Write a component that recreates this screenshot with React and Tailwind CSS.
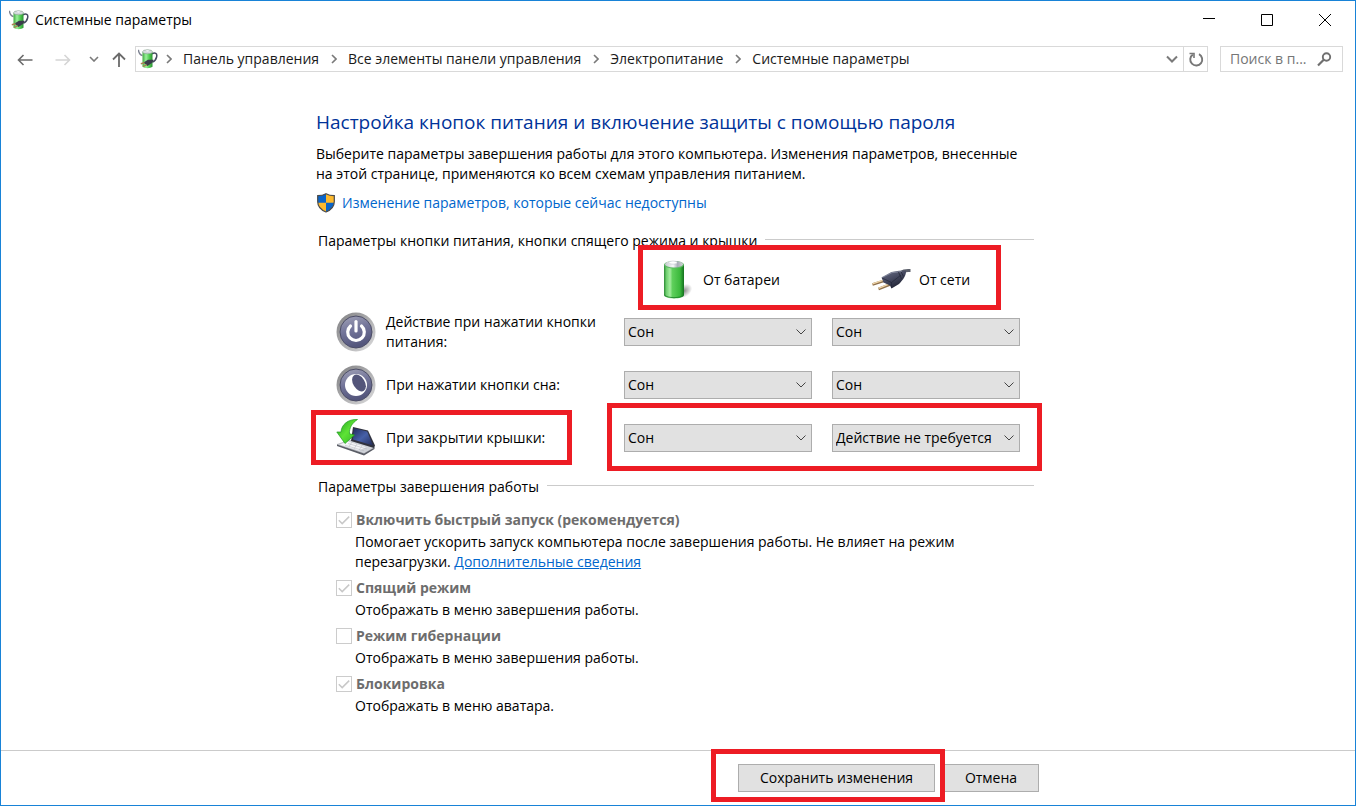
import React from 'react';

const crumbs = ['Панель управления', 'Все элементы панели управления', 'Электропитание', 'Системные параметры'];

const BatteryPlugIcon = () => (
    <svg className="w-5 h-5 shrink-0" viewBox="0 0 20 20" aria-hidden="true">
        <defs>
            <linearGradient id="miniBattery">
                <stop offset="0" stopColor="#3fa83f" />
                <stop offset="0.35" stopColor="#9af09a" />
                <stop offset="0.7" stopColor="#4cc94c" />
                <stop offset="1" stopColor="#2c8f36" />
            </linearGradient>
        </defs>
        <path d="M0.4 0.800C0.800 4 1.800 6 4.500 6.500" fill="none" stroke="#7b8090" strokeWidth="1.400" />
        <path d="M14 5C17 3 19.500 4.500 18.600 8C18 10.500 17 12 14.500 13" fill="none" stroke="#454a60" strokeWidth="1.500" />
        <path d="M4.500 3V17.800C6.500 19.600 12.500 19.600 14.500 17.800V3Z" fill="url(#miniBattery)" />
        <ellipse cx="9.500" cy="2.800" rx="5" ry="2" fill="#d5dade" stroke="#7fa387" strokeWidth="0.600" />
        <ellipse cx="9.500" cy="1.900" rx="2.200" ry="1" fill="#f6f6f8" stroke="#a4a8b0" strokeWidth="0.300" />
        <path d="M5.500 13.500L10 10.800L15.500 10.800L14.500 13.500L9.500 17Z" fill="#3a3c4a" />
        <path d="M2.800 14.800L6.500 13.800M5 17.300L8.800 15.800" stroke="#a98450" strokeWidth="1.400" />
    </svg>
);

const BatteryIcon = () => (
    <svg className="w-10 h-10 shrink-0" viewBox="0 0 40 40" aria-hidden="true">
        <defs>
            <linearGradient id="batteryBody">
                <stop offset="0" stopColor="#2c8a35" />
                <stop offset="0.12" stopColor="#6fcf6f" />
                <stop offset="0.3" stopColor="#a5eda0" />
                <stop offset="0.42" stopColor="#5fd05c" />
                <stop offset="0.8" stopColor="#3bb93c" />
                <stop offset="1" stopColor="#14701f" />
            </linearGradient>
            <linearGradient id="batteryTop">
                <stop offset="0" stopColor="#c4c9cc" />
                <stop offset="0.45" stopColor="#f7f8fa" />
                <stop offset="0.7" stopColor="#a9adb8" />
                <stop offset="1" stopColor="#d0d4d6" />
            </linearGradient>
            <radialGradient id="batteryShadow">
                <stop offset="0" stopColor="#000" stopOpacity="0.450" />
                <stop offset="1" stopColor="#000" stopOpacity="0" />
            </radialGradient>
        </defs>
        <ellipse cx="29" cy="31" rx="9" ry="6" fill="url(#batteryShadow)" transform="rotate(-35 29 31)" />
        <path d="M9 4.500V35C9 39.500 29 39.500 29 35V4.500Z" fill="url(#batteryBody)" />
        <ellipse cx="19" cy="4.800" rx="10" ry="3.800" fill="#5fb866" />
        <ellipse cx="19" cy="4.200" rx="9" ry="3.300" fill="url(#batteryTop)" />
        <ellipse cx="18" cy="2.600" rx="4" ry="1.600" fill="#fff" stroke="#b8bdc8" strokeWidth="0.500" />
        <path d="M9.500 35C12 38.500 26 38.500 28.500 35" fill="none" stroke="#1a7d27" strokeWidth="0.800" />
    </svg>
);

const PlugIcon = () => (
    <svg className="w-10 h-10 shrink-0" viewBox="0 0 40 40" aria-hidden="true">
        <defs>
            <linearGradient id="plugBody" x1="0" y1="0" x2="0.600" y2="1">
                <stop offset="0" stopColor="#6d7188" />
                <stop offset="0.5" stopColor="#464a61" />
                <stop offset="1" stopColor="#1d2030" />
            </linearGradient>
        </defs>
        <path d="M1.500 24.500L14 20.500" stroke="#8f704a" strokeWidth="2.600" />
        <path d="M1.500 23.800L14 19.600" stroke="#f0d6aa" strokeWidth="1.300" />
        <path d="M7.500 29L19 24.500" stroke="#8f704a" strokeWidth="2.600" />
        <path d="M7.500 28.300L19 23.600" stroke="#f0d6aa" strokeWidth="1.300" />
        <path d="M30 12.500C33 10 35 10.500 39.500 10.500" fill="none" stroke="#5c606b" strokeWidth="3" />
        <path d="M10.500 17.500L20.500 12L28 10.800L35 10.500C35.500 15 32 20 28 24L20.500 28.500L19 25.500L12.500 22.500Z" fill="url(#plugBody)" />
        <path d="M11 17.500L21 12.600L31 11.500" fill="none" stroke="#9a9fb2" strokeWidth="0.700" />
        <path d="M11 18L20.500 22.500L20.500 28M20.500 22.500L30 15" fill="none" stroke="#23263a" strokeWidth="0.700" />
        <path d="M27.500 12L30.500 19M30 11.500L32.500 16.500" stroke="#262938" strokeWidth="0.800" />
    </svg>
);

const RoundButtonFace = ({ id, children }) => (
    <svg className="w-10 h-10 shrink-0" viewBox="0 0 40 40" aria-hidden="true">
        <defs>
            <linearGradient id={`${id}Rim`} x1="0" y1="0" x2="1" y2="1">
                <stop offset="0" stopColor="#7e7e80" />
                <stop offset="0.55" stopColor="#b2b2b4" />
                <stop offset="1" stopColor="#dededf" />
            </linearGradient>
            <linearGradient id={`${id}Face`} x1="0" y1="0" x2="0.300" y2="1">
                <stop offset="0" stopColor="#a3a4b8" />
                <stop offset="0.5" stopColor="#73759a" />
                <stop offset="1" stopColor="#54567c" />
            </linearGradient>
        </defs>
        <circle cx="20" cy="20" r="19.500" fill={`url(#${id}Rim)`} />
        <circle cx="20" cy="20" r="16" fill={`url(#${id}Face)`} stroke="#4c4d66" strokeWidth="1" />
        {children}
    </svg>
);

const PowerIcon = () => (
    <RoundButtonFace id="power">
        <path d="M14.500 14A8.300 8.300 0 1 0 25.500 14" fill="none" stroke="#fff" strokeWidth="3.200" strokeLinecap="round" />
        <path d="M20 9.500V19" stroke="#fff" strokeWidth="3.200" strokeLinecap="round" />
    </RoundButtonFace>
);

const SleepIcon = () => (
    <RoundButtonFace id="sleep">
        <circle cx="20" cy="20" r="11" fill="#fff" />
        <ellipse cx="23" cy="18" rx="5.800" ry="9.200" fill="#53557a" transform="rotate(-32 23 18)" />
    </RoundButtonFace>
);

const LidIcon = () => (
    <svg className="w-10 h-10 shrink-0" viewBox="0 0 40 40" aria-hidden="true">
        <defs>
            <linearGradient id="lidScreen" x1="0" y1="0" x2="1" y2="1">
                <stop offset="0" stopColor="#222b5c" />
                <stop offset="0.5" stopColor="#4660a8" />
                <stop offset="1" stopColor="#252c58" />
            </linearGradient>
            <linearGradient id="lidArrow" x1="0" y1="0" x2="1" y2="1">
                <stop offset="0" stopColor="#1d9a1e" />
                <stop offset="0.5" stopColor="#5ee336" />
                <stop offset="1" stopColor="#2bb422" />
            </linearGradient>
        </defs>
        <path d="M1 26.500L14 22L38.500 29.500L28 35.500Z" fill="#cfd2d8" stroke="#9a9da4" strokeWidth="0.500" />
        <path d="M1 26.500L28 35.500L38.500 29.500V31L28 37.500L1 28Z" fill="#5a5d66" />
        <path d="M3.500 26.500L12 23.500L30 29.300L23 32.500Z" fill="#f3f4f6" />
        <path d="M9 27.300L28 32.800M12 25.500L31 31M16 24L13 28.500M21 26L18 31M26 28L23 32" stroke="#b2b5bc" strokeWidth="0.500" />
        <path d="M17 9L32 12.500L39 27.500L38 30L15 23Z" fill="#30323e" />
        <path d="M18 10.300L31.200 13.500L37 27.500L17 21.500Z" fill="url(#lidScreen)" />
        <path d="M21.500 1.500C12 1 5.500 6.500 5 14L0.800 14L9 25.500L18.500 17L13.500 15.800C13 10 16 5 21.500 1.500Z" fill="url(#lidArrow)" stroke="#1d9a1e" strokeWidth="0.700" />
    </svg>
);

const ShieldIcon = () => (
    <svg className="w-5 h-5 shrink-0" viewBox="0 0 20 20" aria-hidden="true">
        <path d="M10 0.700C12.500 2.200 15.500 2.700 18.300 2.700V8.500C18.300 13.500 15 17 10 19C5 17 1.700 13.500 1.700 8.500V2.700C4.500 2.700 7.500 2.200 10 0.700Z" fill="#fdb92c" />
        <path d="M10 0.700V9.800H1.700V2.700C4.500 2.700 7.500 2.200 10 0.700Z" fill="#0a64c8" />
        <path d="M10 9.800H18.200C17.500 14 15 17 10 19Z" fill="#0a64c8" />
        <path d="M10 0.700C12.500 2.200 15.500 2.700 18.300 2.700V8.500C18.300 13.500 15 17 10 19C5 17 1.700 13.500 1.700 8.500V2.700C4.500 2.700 7.500 2.200 10 0.700Z" fill="none" stroke="#4b4b4b" strokeWidth="1.200" />
    </svg>
);

const Chevron = ({ className, d = 'M0.500 0.500L5 5L9.500 0.500', box = '0 0 10 6', width = 1 }) => (
    <svg className={className} viewBox={box} fill="none" stroke="currentColor" strokeWidth={width} aria-hidden="true">
        <path d={d} />
    </svg>
);

// Red frame drawn over the highlighted area
const Highlight = ({ className }) => (
    <div className={`absolute pointer-events-none border-5 border-[#ed1c24] ${className}`} />
);

const SectionTitle = ({ children }) => (
    <div className="flex gap-2 pl-0.5 pr-1.5">
        <h2>{children}</h2>
        <div className="flex-1 mt-2 border-t border-[#cbcbcb]" />
    </div>
);

const ActionSelect = ({ label, value }) => (
    <div className="relative">
        <select
            aria-label={label}
            defaultValue={value}
            className="w-full h-7 pl-[3px] pr-5 appearance-none bg-[#e1e1e1] border border-[#adadad] text-black"
        >
            <option>Сон</option>
            <option>Действие не требуется</option>
        </select>
        <Chevron className="absolute right-1.5 top-[11px] w-2.5 h-1.5 pointer-events-none text-[#444444]" />
    </div>
);

const ActionRow = ({ icon, label, battery, mains, children }) => (
    <div className="relative grid grid-cols-[288px_188px_188px] gap-x-5 items-center min-h-10">
        <div className="flex items-center gap-2.5 pl-5">
            {icon}
            <span>{label}</span>
        </div>
        <ActionSelect label={`${label} От батареи`} value={battery} />
        <ActionSelect label={`${label} От сети`} value={mains} />
        {children}
    </div>
);

const ShutdownOption = ({ id, label, checked, children }) => (
    <div className="pl-5">
        <div className="flex items-center gap-1">
            <span className="relative w-4 h-4">
                <input
                    id={id}
                    type="checkbox"
                    defaultChecked={checked}
                    disabled
                    className="block w-4 h-4 appearance-none bg-white border border-[#cccccc]"
                />
                {checked && (
                    <svg className="absolute inset-0 w-4 h-4 pointer-events-none" viewBox="0 0 16 16" fill="none" stroke="#c8c8c8" strokeWidth="1.500" aria-hidden="true">
                        <path d="M2.800 8.200L6.200 11.600L13.200 4.600" />
                    </svg>
                )}
            </span>
            <label htmlFor={id} className="font-bold text-[#6d6d6d]">{label}</label>
        </div>
        <p className="mt-0.5 pl-[19px]">{children}</p>
    </div>
);

const App = () => (
    <div className="min-h-screen flex flex-col bg-white border border-[#1883d7] font-['Open_Sans','Noto_Sans',sans-serif] text-[14px] leading-5 text-black">
        {/* Title bar */}
        <header className="flex items-center h-[38px] pl-2 pr-6">
            <BatteryPlugIcon />
            <h1 className="flex-1 ml-1.5">Системные параметры</h1>
            <div className="flex items-center gap-[46px]">
                <button type="button" aria-label="Свернуть">
                    <svg className="w-3 h-3" viewBox="0 0 12 12" stroke="#000"><path d="M0 4.500H12" /></svg>
                </button>
                <button type="button" aria-label="Развернуть">
                    <svg className="w-3 h-3" viewBox="0 0 12 12" fill="none" stroke="#000"><path d="M0.500 0.500H11.500V11.500H0.500Z" /></svg>
                </button>
                <button type="button" aria-label="Закрыть">
                    <svg className="w-3 h-3" viewBox="0 0 12 12" stroke="#000"><path d="M0 0L12 12M12 0L0 12" /></svg>
                </button>
            </div>
        </header>

        {/* Navigation */}
        <nav className="flex items-center mt-[7px] pl-4 pr-3">
            <button type="button" aria-label="Назад" className="text-[#6b6b6b]">
                <Chevron className="w-4 h-4" box="0 0 16 16" d="M15.500 9H1.500M6.500 4L1.500 9L6.500 14" width={1.6} />
            </button>
            <button type="button" aria-label="Вперёд" className="ml-[22px] text-[#d5d5d5]">
                <Chevron className="w-4 h-4" box="0 0 16 16" d="M0.500 9H14.500M9.500 4L14.500 9L9.500 14" width={1.6} />
            </button>
            <button type="button" aria-label="Последние расположения" className="ml-[18px] text-[#7a7a7a]">
                <Chevron className="w-2.5 h-1.5" d="M1 1L5 5L9 1" width={1.6} />
            </button>
            <button type="button" aria-label="Вверх" className="ml-3 text-[#6b6b6b]">
                <Chevron className="w-4 h-4" box="0 0 16 16" d="M8 16V2.500M2 8.500L8 2.500L14 8.500" width={1.8} />
            </button>
            <div className="flex flex-1 items-center h-[26px] ml-2 border border-[#d9d9d9]">
                <div className="ml-0.5"><BatteryPlugIcon /></div>
                <ol className="flex flex-1 items-center">
                    {crumbs.map((crumb) => (
                        <li key={crumb} className="flex items-center ml-3 first:ml-2">
                            <Chevron className="w-1.5 h-2.5 mr-[11px] text-[#7a7a7a]" box="0 0 6 10" d="M1 1L5 5L1 9" width={1.6} />
                            <a href="#" className="text-[#1a1a1a]">{crumb}</a>
                        </li>
                    ))}
                </ol>
                <button type="button" aria-label="Предыдущие расположения" className="mr-[5px] text-[#7a7a7a]">
                    <Chevron className="w-3 h-2" box="0 0 12 8" d="M1 1.500L6 6.500L11 1.500" width={2} />
                </button>
                <button type="button" aria-label="Обновить" className="flex items-center justify-center w-6 h-6 border-l border-[#d9d9d9]">
                    <svg className="w-4 h-4" viewBox="0 0 16 16" fill="none" stroke="#777" strokeWidth="1.900">
                        <path d="M11 3.200A6 6 0 1 1 4.800 3.600" />
                        <path d="M1.500 2.500H6V7" strokeWidth="1.600" />
                    </svg>
                </button>
            </div>
            <div className="flex items-center w-[123px] h-[26px] ml-3 pl-[9px] pr-2.5 border border-[#d9d9d9]">
                <input
                    type="text"
                    aria-label="Поиск в панели управления"
                    placeholder="Поиск в п..."
                    className="flex-1 min-w-0 outline-none placeholder:text-[#767676]"
                />
                <svg className="w-4 h-4" viewBox="0 0 16 16" fill="none" stroke="#6f6f6f" aria-hidden="true">
                    <circle cx="10.500" cy="6" r="3.700" strokeWidth="1.900" />
                    <path d="M7.700 8.800L2 14.500" strokeWidth="2.200" />
                </svg>
            </div>
        </nav>

        {/* Settings */}
        <main className="flex-1 w-[724px] mx-auto pt-9 pb-8">
            <h2 className="text-[19px] leading-7 text-[#003399]">Настройка кнопок питания и включение защиты с помощью пароля</h2>
            <p className="mt-2 whitespace-nowrap">
                Выберите параметры завершения работы для этого компьютера. Изменения параметров, внесенные
                <br />
                на этой странице, применяются ко всем схемам управления питанием.
            </p>
            <a href="#" className="flex items-center gap-1.5 mt-[9px] text-[#0066cc]">
                <ShieldIcon />
                Изменение параметров, которые сейчас недоступны
            </a>

            <section className="mt-[18px]">
                <SectionTitle>Параметры кнопки питания, кнопки спящего режима и крышки</SectionTitle>
                <div className="relative flex items-center h-10 mt-[9px] pl-[339px]">
                    <div className="flex items-center w-52 gap-2">
                        <BatteryIcon />
                        <span>От батареи</span>
                    </div>
                    <div className="flex items-center gap-2 pl-2">
                        <PlugIcon />
                        <span>От сети</span>
                    </div>
                    <Highlight className="left-[322px] w-[363px] -top-[15px] h-[65px]" />
                </div>
                <div className="mt-3 space-y-[13px]">
                    <ActionRow icon={<PowerIcon />} label="Действие при нажатии кнопки питания:" battery="Сон" mains="Сон" />
                    <ActionRow icon={<SleepIcon />} label="При нажатии кнопки сна:" battery="Сон" mains="Сон" />
                    <ActionRow icon={<LidIcon />} label="При закрытии крышки:" battery="Сон" mains="Действие не требуется">
                        <Highlight className="-left-[5px] w-[261px] -top-2 h-[55px]" />
                        <Highlight className="left-[291px] w-[435px] -top-[15px] h-[68px]" />
                    </ActionRow>
                </div>
            </section>

            <section className="mt-[19px]">
                <SectionTitle>Параметры завершения работы</SectionTitle>
                <div className="mt-[13px] space-y-1.5">
                    <ShutdownOption id="fast-startup" label="Включить быстрый запуск (рекомендуется)" checked>
                        Помогает ускорить запуск компьютера после завершения работы. Не влияет на режим
                        <br />
                        перезагрузки. <a href="#" className="text-[#0066cc] underline">Дополнительные сведения</a>
                    </ShutdownOption>
                    <ShutdownOption id="sleep-mode" label="Спящий режим" checked>
                        Отображать в меню завершения работы.
                    </ShutdownOption>
                    <ShutdownOption id="hibernate" label="Режим гибернации">
                        Отображать в меню завершения работы.
                    </ShutdownOption>
                    <ShutdownOption id="lock" label="Блокировка" checked>
                        Отображать в меню аватара.
                    </ShutdownOption>
                </div>
            </section>
        </main>

        {/* Footer */}
        <footer className="border-t border-[#cbcbcb]">
            <div className="relative flex justify-end gap-2 w-[724px] h-[54px] mx-auto pt-[13px] pr-px">
                <button type="button" className="w-[197px] h-7 bg-[#e1e1e1] border border-[#adadad]">Сохранить изменения</button>
                <button type="button" className="w-24 h-7 bg-[#e1e1e1] border border-[#adadad]">Отмена</button>
                <Highlight className="left-[395px] w-[234px] -top-0.5 h-[53px]" />
            </div>
        </footer>
    </div>
);

export default App;
